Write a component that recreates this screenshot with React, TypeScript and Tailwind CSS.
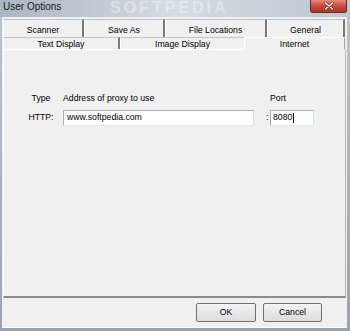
import React from "react"

const font = { fontFamily: '"Liberation Sans", Arial, sans-serif' }

function Tab({ label, w, dark = true, top = 0 }: { label: string; w: number; dark?: boolean; top?: number }) {
  return (
    <div
      className={`h-full flex items-center justify-center border-t border-l border-t-[#c4c4c4] border-l-white ${dark ? "border-r-2 border-r-[#7a7a7a]" : ""}`}
      style={{ width: w, paddingTop: top }}
    >
      <span className="text-[8.7px] text-black leading-none">{label}</span>
    </div>
  )
}

export default function App() {
  return (
    <div className="relative w-[350px] h-[331px] overflow-hidden flex flex-col bg-gradient-to-b from-[#bcc6d1] to-[#98a4b1]" style={font}>
      {/* title bar */}
      <div className="h-[17px] flex justify-between bg-gradient-to-r from-[#aab6c3] via-[#d4dce4] to-[#bcc7d2]">
        <span className="pl-[3px] pt-[2px] text-[10px] leading-none text-[#1a1a1a]">User Options</span>
        <div className="w-[37px] h-[13px] mr-[3px] rounded-b-[3px] border border-t-0 border-[#6e2a22] bg-gradient-to-b from-[#e3897b] via-[#c8493a] to-[#b43322] flex items-center justify-center">
          <svg width="10" height="8" viewBox="0 0 10 8">
            <path d="M1.5 1 L8.5 7 M8.5 1 L1.5 7" stroke="#5a1a12" strokeWidth="2.6" strokeLinecap="round" />
            <path d="M1.5 1 L8.5 7 M8.5 1 L1.5 7" stroke="white" strokeWidth="1.6" strokeLinecap="round" />
          </svg>
        </div>
      </div>

      {/* client area */}
      <div className="flex-1 ml-[2px] mr-[3px] mb-[3px] bg-[#f0f0f0] flex flex-col border-b border-white">
        <div className="flex-1 pt-[2px] pl-[1px] pr-[1px] flex flex-col">
          <div className="h-[18px] flex">
            <Tab label="Scanner" w={81} top={3} />
            <Tab label="Save As" w={81} top={3} />
            <Tab label="File Locations" w={102} top={3} />
            <Tab label="General" w={78} top={3} />
          </div>
          <div className="h-[12px] flex">
            <Tab label="Text Display" w={117} top={2} />
            <Tab label="Image Display" w={124} dark={false} top={2} />
            <div className="w-[101px] h-full flex items-start justify-center pt-[2px] border-l border-t border-white border-r border-r-[#a0a0a0]">
              <span className="text-[8.7px] leading-none text-black">Internet</span>
            </div>
          </div>
          <div className="flex-1 border-l border-white border-r border-r-[#b8b8b8] border-b-2 border-b-[#8a8a8a] relative">
            <div className="absolute left-0 right-[101px] top-0 border-t border-white" />
            <div className="pl-[23px] pt-[45px] grid grid-cols-[28px_199px_8px_52px] items-center text-[8.7px] leading-none text-black">
              <span className="text-center">Type</span>
              <span className="pl-[8px]">Address of proxy to use</span>
              <span />
              <span className="pl-[8px]">Port</span>
              <span className="text-center mt-[7px]">HTTP:</span>
              <div className="mt-[7px] ml-[8px] h-[16px] bg-white border border-[#abadb3] border-b-[#e3e9ef] border-r-[#dbdfe6] flex items-center pl-[3px]">
                www.softpedia.com
              </div>
              <span className="mt-[7px] text-center pl-[12px]">:</span>
              <div className="mt-[7px] ml-[8px] h-[16px] bg-white border border-[#abadb3] border-b-[#e3e9ef] border-r-[#dbdfe6] flex items-center pl-[2px]">
                8080<span className="inline-block w-px h-[10px] bg-black ml-[1px]" />
              </div>
            </div>
          </div>
        </div>
        <div className="h-[29px] flex justify-end items-start pt-[5px] pr-[25px] gap-[7px]">
          <button className="w-[60px] h-[19px] rounded-[2px] border border-[#707070] bg-gradient-to-b from-[#f4f4f4] to-[#dcdcdc] text-[8.7px] text-black">
            OK
          </button>
          <button className="w-[59px] h-[19px] rounded-[2px] border border-[#707070] bg-gradient-to-b from-[#f4f4f4] to-[#dcdcdc] text-[8.7px] text-black">
            Cancel
          </button>
        </div>
      </div>

      {/* watermark */}
      <div className="absolute left-[110px] top-0 text-[16px] font-bold tracking-[3px] text-white/35 leading-none pointer-events-none select-none">
        SOFTPEDIA
      </div>
    </div>
  )
}
